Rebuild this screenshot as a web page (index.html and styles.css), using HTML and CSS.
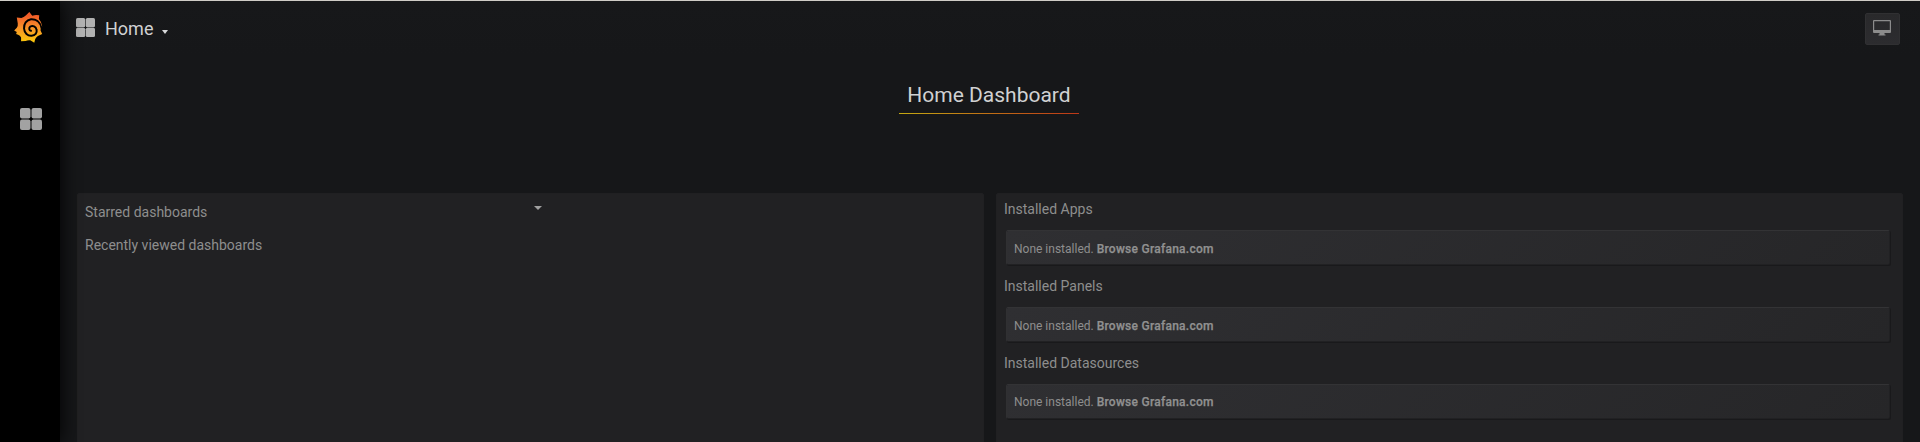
FILE: index.html
```html
<!DOCTYPE html>
<html lang="en">
<head>
<meta charset="utf-8">
<title>Home</title>
<link rel="stylesheet" href="styles.css">
</head>
<body>
<div class="app">
  <aside class="sidebar">
    <svg class="logo" viewBox="42 36 87 94">
      <defs><linearGradient id="flame" x1="0" y1="0" x2="0" y2="1"><stop offset=".1" stop-color="#f05a28"/><stop offset=".5" stop-color="#f7902a"/><stop offset="1" stop-color="#fbca0a"/></linearGradient></defs>
      <path fill="url(#flame)" d="M88 36L97 47Q107 44 118 46L117 57Q126 66 127 80L123 82L122 92L127 103L114 109Q108 113 106 118L103 129L91 122Q83 121 77 124L63 125L63 113Q60 107 54 105L48 103L50 97L42 92L50 84Q54 79 53 71L50 53L64 54Q71 53 78 46Z"/>
      <path fill="none" stroke="#000" stroke-width="6" stroke-linecap="round" d="M125 84C121 65 107 57 93 58C79 60 71 72 72 86C73 100 83 109 95 108C106 107 112 99 110 90C108 79 98 76 91 80C86 84 87 92 93 93"/>
    </svg>
    <svg class="side-grid" viewBox="0 0 22 22"><g><rect width="10.5" height="10.5" rx="2"/><rect x="11.5" width="10.5" height="10.5" rx="2"/><rect y="11.5" width="10.5" height="10.5" rx="2"/><rect x="11.5" y="11.5" width="10.5" height="10.5" rx="2"/></g></svg>
  </aside>
  <main class="main">
    <header class="navbar">
      <svg class="nav-grid" viewBox="0 0 19 19"><rect width="9.2" height="9.2" rx="1.5"/><rect x="9.8" width="9.2" height="9.2" rx="1.5"/><rect y="9.8" width="9.2" height="9.2" rx="1.5"/><rect x="9.8" y="9.8" width="9.2" height="9.2" rx="1.5"/></svg>
      <span class="nav-title">Home</span>
      <i class="caret nav-caret"></i>
      <button class="tv" aria-label="Cycle view mode"><svg viewBox="0 0 18 16"><path fill-rule="evenodd" d="M1 0h16Q18 0 18 1v11Q18 13 17 13H11.500v1.500h1V15.500h-7V14.500h1V13H1Q0 13 0 12v-11Q0 0 1 0zM1.200 1.200v8.800h15.600V1.200z"/></svg></button>
    </header>
    <h1 class="heading">Home Dashboard</h1>
    <div class="panels">
      <section class="panel lists">
        <i class="caret panel-caret"></i>
        <h6>Starred dashboards</h6>
        <h6>Recently viewed dashboards</h6>
      </section>
      <section class="panel plugins">
        <h6>Installed Apps</h6>
        <div class="card">None installed. <b>Browse Grafana.com</b></div>
        <h6>Installed Panels</h6>
        <div class="card">None installed. <b>Browse Grafana.com</b></div>
        <h6>Installed Datasources</h6>
        <div class="card card-last">None installed. <b>Browse Grafana.com</b></div>
      </section>
    </div>
  </main>
</div>
</body>
</html>
```
FILE: styles.css
```css
* { box-sizing: border-box; }
body { margin: 0; background: #161719; color: #8e8e8e; font-family: Roboto, sans-serif; }
.app { display: flex; height: 442px; overflow: hidden; border-top: 1px solid #d0cdc7; }
.sidebar { flex: 0 0 60px; background: #000; box-shadow: 0 0 20px #000; display: flex; flex-direction: column; align-items: flex-start; padding: 11px 0 0 14px; z-index: 1; }
.logo { width: 29px; height: 31px; }
.side-grid { width: 22px; height: 22px; margin: 65px 0 0 6px; fill: #a2a2a2; }
.main { flex: 1; min-width: 0; }
.navbar { height: 55px; display: flex; align-items: center; padding: 0 20px 0 16px; background: linear-gradient(180deg, #17181a, #161719); }
.nav-grid { width: 19px; height: 19px; fill: #b2b2b2; margin-top: -2px; }
.nav-title { font-size: 18px; line-height: 24px; color: #d0d1d2; margin: 1px 0 0 10px; }
.caret { display: block; border: solid transparent; border-width: 3px 3px 0; border-top-color: #d8d9da; width: 6px; height: 3px; }
.nav-caret { border-width: 4px 3px 0; height: 4px; margin: 6px 0 0 9px; }
.tv { margin-left: auto; width: 35px; height: 32px; border: 1px solid #303032; border-radius: 2px; background: linear-gradient(#29292b, #2c2c2f); padding: 0 1px 1px 0; display: flex; align-items: center; justify-content: center; }
.tv svg { width: 18px; height: 16px; fill: #8c8c8c; }
.heading { width: 180px; height: 38px; margin: 20px auto 0; transform: translateX(-1px); background: linear-gradient(90deg, #c4a812, #bd3718) bottom / 100% 1px no-repeat; text-align: center; font-weight: 400; font-size: 21px; line-height: 38px; color: #d0d1d2; }
.panels { display: grid; grid-template-columns: 907px 907px; gap: 12px; padding: 79px 0 0 17px; }
.panel { height: 260px; background: #212123; border: 1px solid #202022; border-radius: 2px; padding: 6px 12px 0 7px; }
h6 { margin: 0; font-weight: 400; font-size: 14px; line-height: 18px; }
.lists { position: relative; }
.lists h6 { margin: 3px 0 15px; }
.lists h6 + h6 { margin-top: 0; }
.panel-caret { position: absolute; left: 456px; top: 12px; border-width: 4px 4px 0; border-top-color: #a0a0a0; width: 8px; height: 4px; }
.card { width: 884px; height: 35px; margin: 12px 0 12px 2px; padding-left: 7px; border: 1px solid transparent; border-top-color: #333335; border-left-color: #303032; border-radius: 2px; background: linear-gradient(135deg, #2f2f32, #262628); background-clip: padding-box; box-shadow: 1px 1px 0 #19191b; font-size: 12px; line-height: 37px; }
.card-last { line-height: 35px; }
.card b { font-weight: 500; letter-spacing: .26px; -webkit-text-stroke: .25px #8e8e8e; color: #929292; }
```
